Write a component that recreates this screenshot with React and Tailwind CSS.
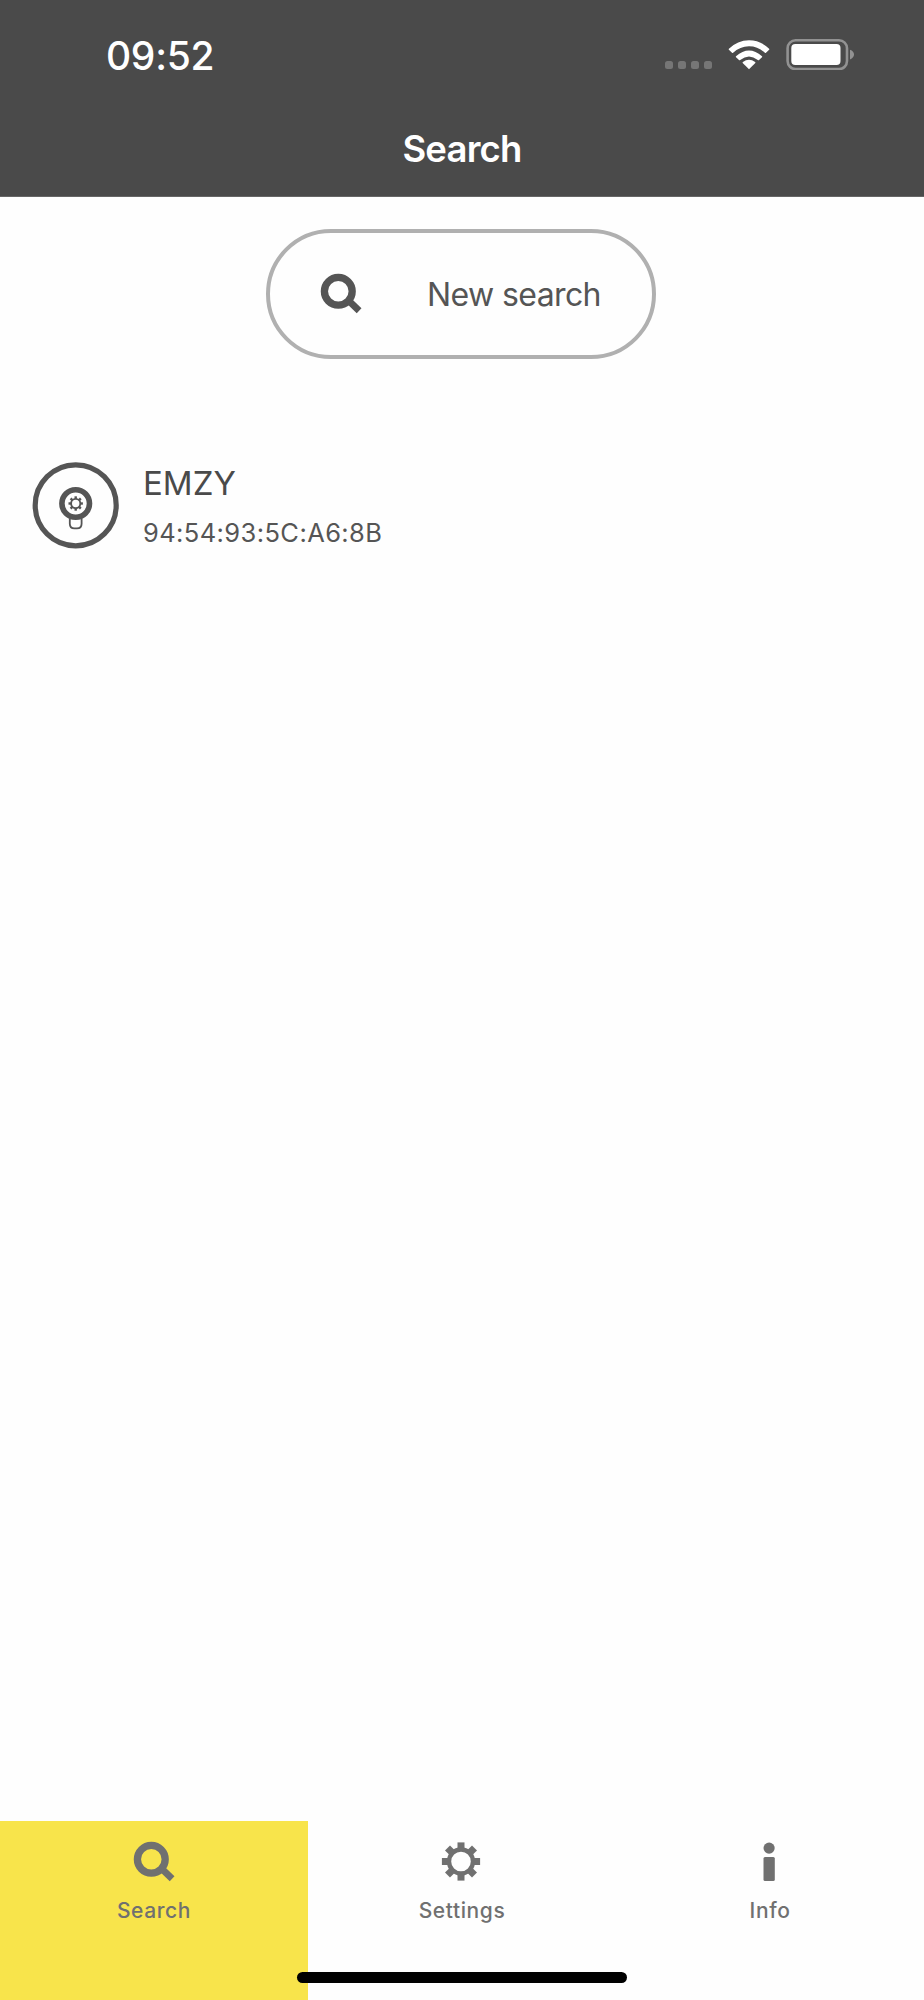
import React, { useState } from 'react';

const SearchIcon = ({ className }) => (
    <svg viewBox="0 0 42 42" className={className} fill="none" stroke="currentColor">
        <circle cx="18.3" cy="18.3" r="13.9" strokeWidth="7.3" />
        <path d="M28.5 27.5 L39.1 37.8" strokeWidth="6.8" />
    </svg>
);

const TEETH = [0, 45, 90, 135, 180, 225, 270, 315];

const GearIcon = ({ className }) => (
    <svg viewBox="0 0 42 42" className={className} fill="currentColor">
        <circle cx="20" cy="20.5" r="12" fill="none" stroke="currentColor" strokeWidth="4.4" />
        {TEETH.map((angle) => (
            <rect key={angle} x="16.5" y="1.4" width="7" height="7.5" transform={`rotate(${angle} 20 20.5)`} />
        ))}
    </svg>
);

const InfoIcon = ({ className }) => (
    <svg viewBox="0 0 42 42" className={className} fill="currentColor">
        <circle cx="20.1" cy="7.1" r="5.6" />
        <rect x="14.5" y="15.9" width="11.3" height="24" rx="1.5" />
    </svg>
);

const DeviceIcon = ({ className }) => (
    <svg viewBox="0 0 88 88" className={className} fill="none" stroke="currentColor">
        <circle cx="43.7" cy="43.3" r="40.5" strokeWidth="5.2" />
        <path d="M37.8 57 V61.8 Q37.8 66.4 42.4 66.4 H45 Q49.6 66.4 49.6 61.8 V57" strokeWidth="1.8" />
        <circle cx="43.7" cy="41.5" r="13.8" strokeWidth="5.6" />
        <circle cx="43.7" cy="41.5" r="4.6" strokeWidth="1.8" />
        {TEETH.map((angle) => (
            <path key={angle} d="M43.7 34.3 V37" strokeWidth="2.4" transform={`rotate(${angle} 43.7 41.5)`} />
        ))}
    </svg>
);

const WifiIcon = () => (
    <svg viewBox="0 0 42 31" className="w-[42px] h-[31px]" fill="white">
        <path d="M21 30.2 L14.7 24 Q14.3 23.4 14.9 22.9 Q21 18.6 27.1 22.9 Q27.7 23.4 27.3 24 Z" />
        <path d="M8 17.3 Q21 5.7 34 17.3 Q34.5 17.8 34 18.3 L31 21.1 Q30.4 21.6 29.8 21.1 Q21 13.8 12.2 21.1 Q11.6 21.6 11 21.1 L8 18.3 Q7.5 17.8 8 17.3 Z" />
        <path d="M.9 9.8 Q9.5 1.2 21 1.2 Q32.5 1.2 41.1 9.8 Q41.6 10.3 41.1 10.8 L38 13.8 Q37.4 14.3 36.9 13.8 Q30 7.3 21 7.3 Q12 7.3 5.1 13.8 Q4.6 14.3 4 13.8 L.9 10.8 Q.4 10.3 .9 9.8 Z" />
    </svg>
);

const BatteryIcon = () => (
    <svg viewBox="0 0 69 31" className="w-[69px] h-[31px]">
        <rect x="1.6" y="1.3" width="59.4" height="28.8" rx="8" fill="none" stroke="#929292" strokeWidth="2.6" />
        <rect x="5.3" y="4.9" width="49.2" height="21.2" rx="4" fill="white" />
        <path d="M64 10.8 Q68 12.3 68 15.6 Q68 18.9 64 20.4 Z" fill="#929292" />
    </svg>
);

const tabs = [
    { id: 'search', label: 'Search', icon: SearchIcon },
    { id: 'settings', label: 'Settings', icon: GearIcon },
    { id: 'info', label: 'Info', icon: InfoIcon },
];

const devices = [{ name: 'EMZY', address: '94:54:93:5C:A6:8B' }];

const App = () => {
    const [activeTab, setActiveTab] = useState('search');

    return (
        <div className="relative w-[924px] h-[2000px] flex flex-col bg-[#fefefe] font-['Inter',sans-serif] overflow-hidden">
            <header className="h-[197px] shrink-0 bg-[#4a4a4a] text-white border-b border-[#666666]">
                {/* Status bar */}
                <div className="h-[108px] flex items-start justify-between pl-[106px] pr-[69px]">
                    <span className="mt-[32px] text-[39px] leading-[48px] font-medium tracking-[-0.3px]">09:52</span>
                    <div className="flex mt-[39px]">
                        <div className="flex gap-[4.8px] mt-[22px] mr-[16px]">
                            {[0, 1, 2, 3].map((dot) => (
                                <span key={dot} className="w-[8.2px] h-[8px] rounded-[2.5px] bg-[#767676]" />
                            ))}
                        </div>
                        <WifiIcon />
                        <div className="w-[16px]" />
                        <BatteryIcon />
                    </div>
                </div>
                <h1 className="mt-[18px] text-center text-[36.5px] leading-[46px] font-semibold tracking-[-0.8px]">Search</h1>
            </header>

            <main className="flex-1 text-[#555555]">
                <button className="mt-[32px] ml-[266px] w-[390px] h-[130px] flex items-center rounded-full border-4 border-[#b0b0b0]">
                    <SearchIcon className="ml-[50px] w-[42px] h-[42px]" />
                    <span className="mt-[2px] ml-[65px] text-[32px] leading-[40px] tracking-[-0.6px] whitespace-nowrap">New search</span>
                </button>

                <ul className="mt-[103px] pl-[32px]">
                    {devices.map((device) => (
                        <li key={device.address} className="flex items-start">
                            <DeviceIcon className="w-[88px] h-[88px]" />
                            <div className="ml-[23px] flex flex-col">
                                <span className="-mt-px text-[33px] leading-[44px] text-[#4a4a4a]">{device.name}</span>
                                <span className="mt-[12px] text-[25.5px] leading-[32px] tracking-[0.4px]">{device.address}</span>
                            </div>
                        </li>
                    ))}
                </ul>
            </main>

            <nav className="h-[179px] shrink-0 grid grid-cols-3 text-[#707070]">
                {tabs.map(({ id, label, icon: Icon }) => (
                    <button
                        key={id}
                        onClick={() => setActiveTab(id)}
                        className={`flex flex-col items-center pt-[20px] ${activeTab === id ? 'bg-[#f8e44b]' : ''}`}
                    >
                        <Icon className="w-[42px] h-[42px]" />
                        <span className="mt-[14px] text-[21px] leading-[28px] font-medium tracking-[0.6px]">{label}</span>
                    </button>
                ))}
            </nav>

            {/* Home indicator */}
            <div className="absolute left-[297px] bottom-[17px] w-[330px] h-[11px] rounded-full bg-black" />
        </div>
    );
};

export default App;
